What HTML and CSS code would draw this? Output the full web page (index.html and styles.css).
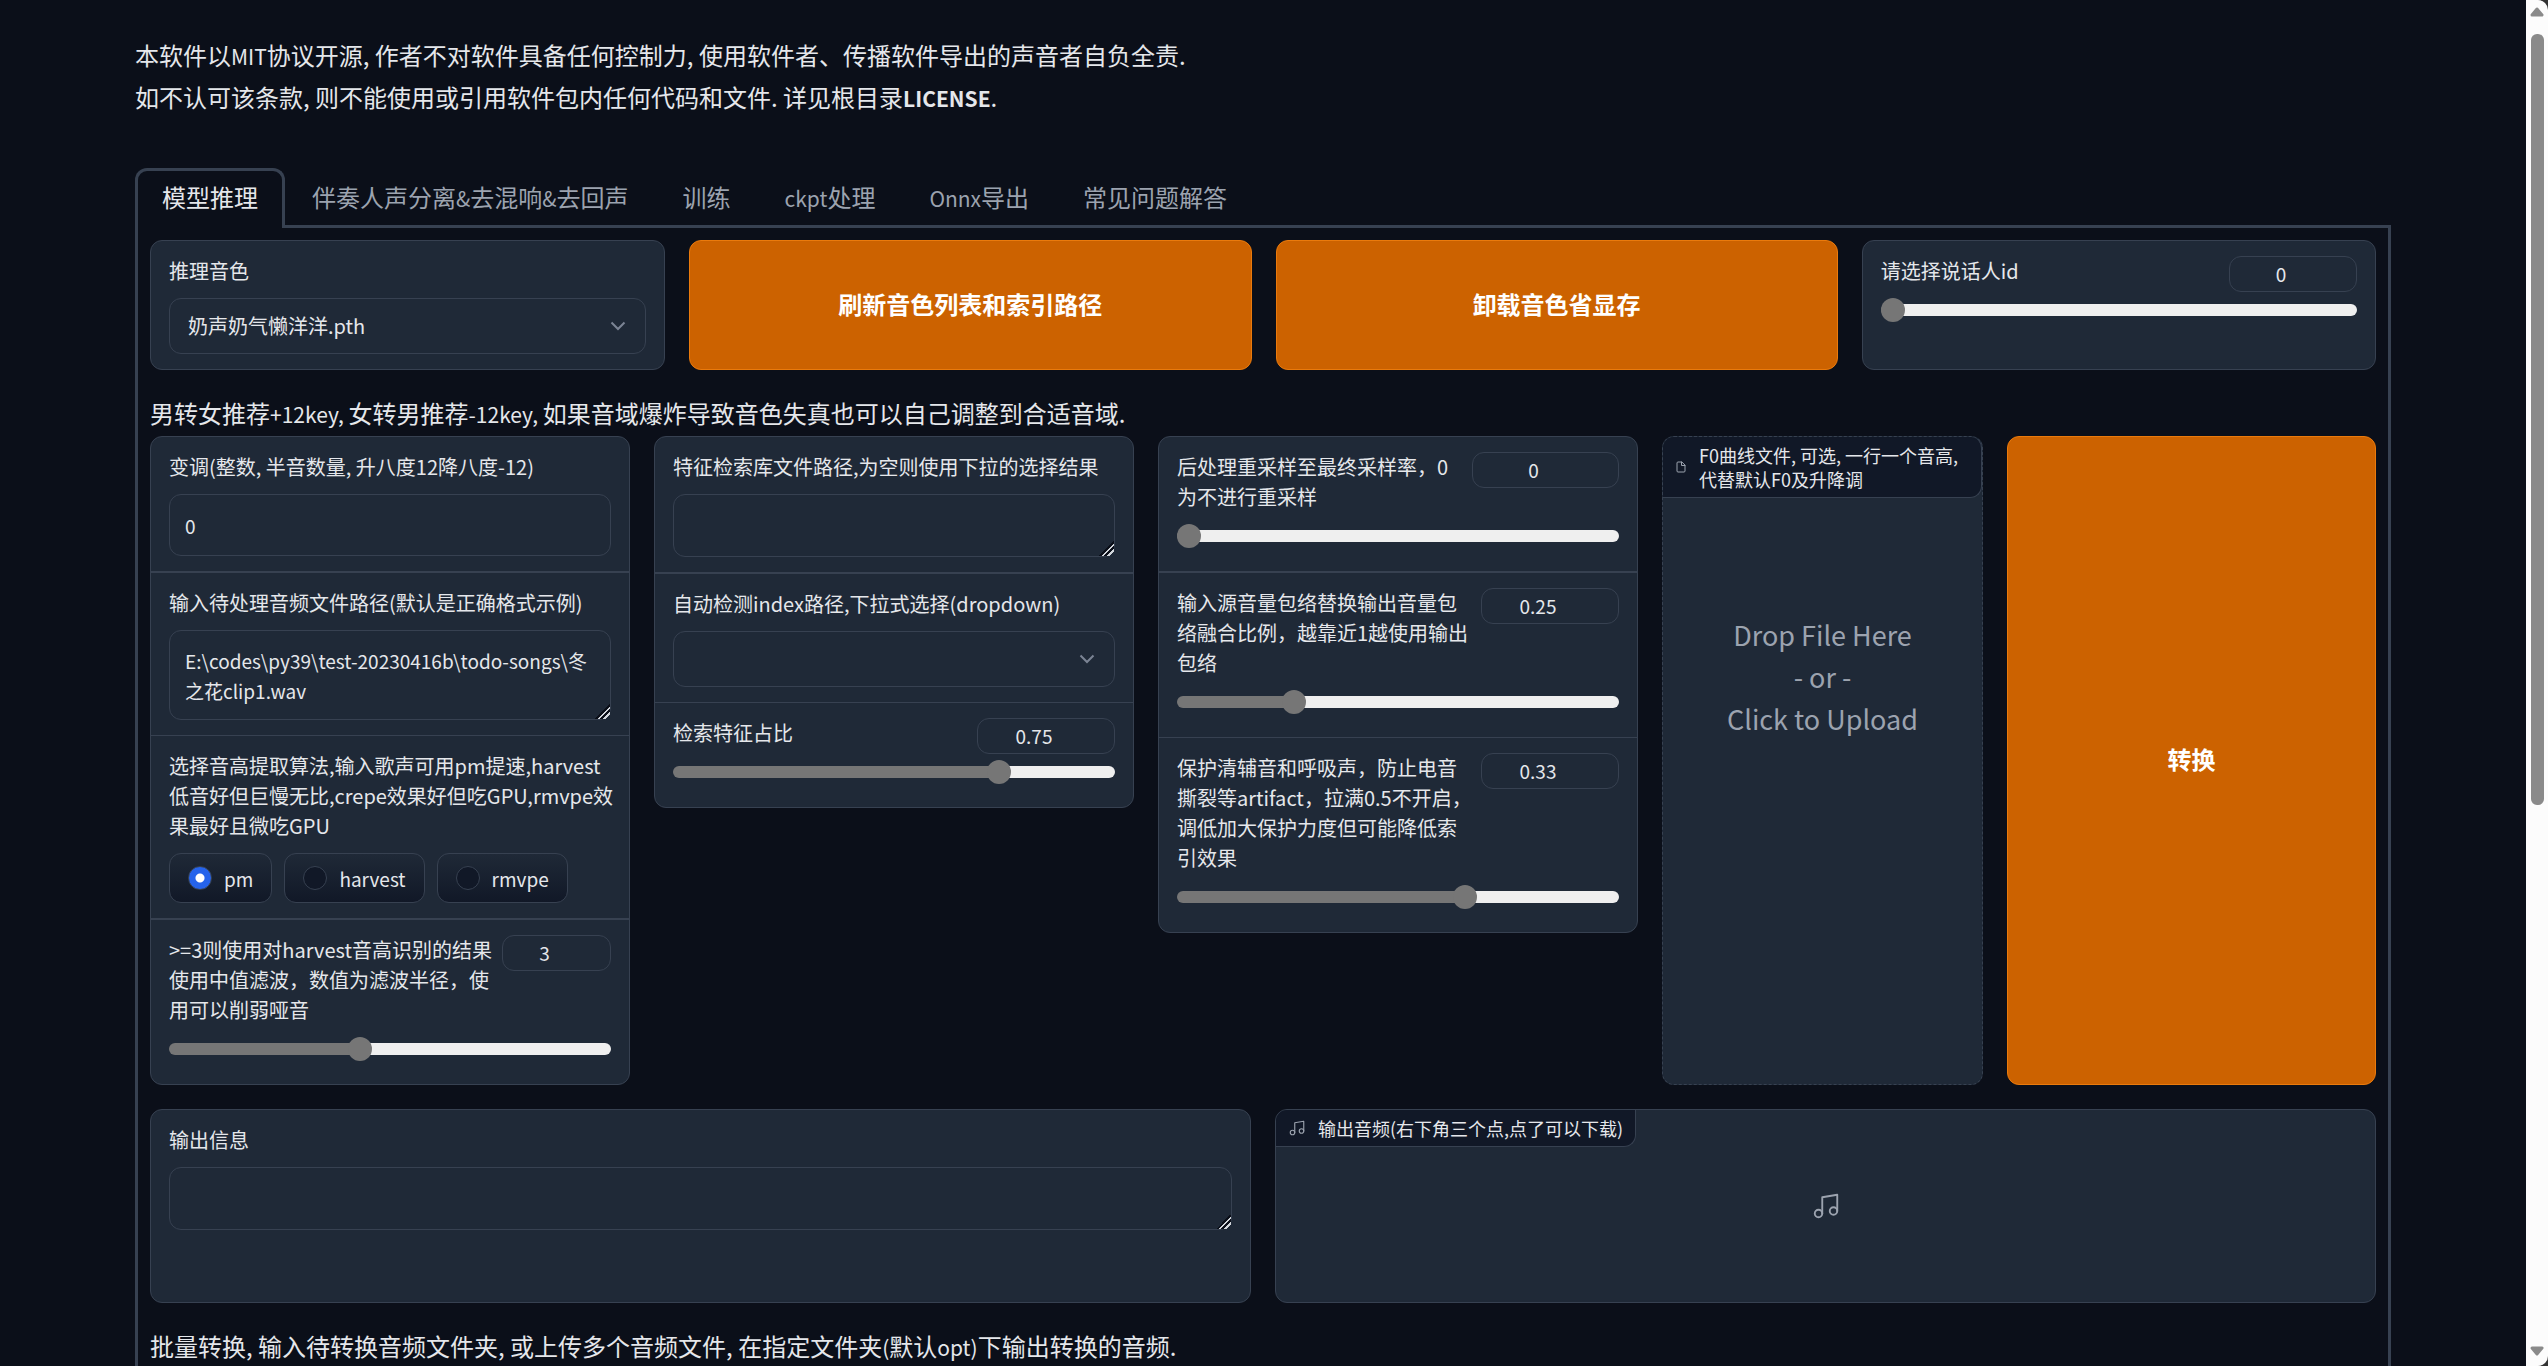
FILE: index.html
```html
<!DOCTYPE html>
<html lang="zh-CN">
<head>
<meta charset="utf-8">
<title>RVC WebUI</title>
<link rel="stylesheet" href="styles.css">
</head>
<body>
<svg class="sprite" aria-hidden="true">
  <symbol id="chevron" viewBox="0 0 16 10"><path d="M1.5 1.5 8 8l6.500-6.500" fill="none" stroke="currentColor" stroke-width="2"/></symbol>
  <symbol id="music" viewBox="0 0 24 24"><g fill="none" stroke="currentColor" stroke-width="1.500" stroke-linecap="round" stroke-linejoin="round"><path d="M9 18V5l12-2v13"/><circle cx="6" cy="18" r="3"/><circle cx="18" cy="16" r="3"/></g></symbol>
  <symbol id="file" viewBox="0 0 24 24"><g fill="none" stroke="currentColor" stroke-width="2" stroke-linecap="round" stroke-linejoin="round"><path d="M13 2H6a2 2 0 0 0-2 2v16a2 2 0 0 0 2 2h12a2 2 0 0 0 2-2V9z"/><path d="M13 2v7h7"/></g></symbol>
</svg>
<main class="app">
  <p class="prose intro">本软件以<span class="latin">MIT</span>协议开源, 作者不对软件具备任何控制力, 使用软件者、传播软件导出的声音者自负全责.<br>如不认可该条款, 则不能使用或引用软件包内任何代码和文件. 详见根目录<strong class="latin">LICENSE</strong>.</p>
  <nav class="tabs">
    <button class="tab tab-active" type="button">模型推理</button>
    <button class="tab" type="button">伴奏人声分离<span class="latin">&amp;</span>去混响<span class="latin">&amp;</span>去回声</button>
    <button class="tab" type="button">训练</button>
    <button class="tab" type="button"><span class="latin">ckpt</span>处理</button>
    <button class="tab" type="button"><span class="latin">Onnx</span>导出</button>
    <button class="tab" type="button">常见问题解答</button>
  </nav>
  <section class="tab-panel">
    <div class="row row-model">
      <div class="card"><div class="block">
        <label class="label" for="voice">推理音色</label>
        <div class="select-wrap"><select class="field select" id="voice"><option>奶声奶气懒洋洋.pth</option></select><svg class="chevron"><use href="#chevron"/></svg></div>
      </div></div>
      <button class="primary" type="button">刷新音色列表和索引路径</button>
      <button class="primary" type="button">卸载音色省显存</button>
      <div class="card"><div class="block">
        <div class="slider-head"><label class="label" for="sid">请选择说话人id</label><input class="field number number-m" type="number" aria-label="请选择说话人id" value="0"></div>
        <input class="range" id="sid" type="range" min="0" max="100" value="0" style="--fill:0">
      </div></div>
    </div>
    <p class="prose hint">男转女推荐<span class="latin">+12key, </span>女转男推荐<span class="latin">-12key, </span>如果音域爆炸导致音色失真也可以自己调整到合适音域.</p>
    <div class="row row-convert">
      <div class="card">
        <div class="block">
          <label class="label" for="pitch">变调(整数, 半音数量, 升八度12降八度-12)</label>
          <input class="field text" id="pitch" type="text" value="0">
        </div>
        <div class="block thick">
          <label class="label" for="path">输入待处理音频文件路径(默认是正确格式示例)</label>
          <textarea class="field area area-two" id="path">E:\codes\py39\test-20230416b\todo-songs\冬之花clip1.wav</textarea>
        </div>
        <div class="block" role="radiogroup" aria-labelledby="f0-label">
          <span class="label" id="f0-label">选择音高提取算法,输入歌声可用pm提速,harvest<br>低音好但巨慢无比,crepe效果好但吃GPU,rmvpe效<br>果最好且微吃GPU</span>
          <div class="choices">
            <label class="choice"><input class="radio" type="radio" name="f0" checked>pm</label>
            <label class="choice"><input class="radio" type="radio" name="f0">harvest</label>
            <label class="choice"><input class="radio" type="radio" name="f0">rmvpe</label>
          </div>
        </div>
        <div class="block thick">
          <div class="slider-head"><label class="label" for="filter">&gt;=3则使用对harvest音高识别的结果<br>使用中值滤波，数值为滤波半径，使<br>用可以削弱哑音</label><input class="field number number-s" type="number" aria-label="滤波半径" value="3"></div>
          <input class="range" id="filter" type="range" min="0" max="7" value="3" style="--fill:.4286">
        </div>
      </div>
      <div class="card card-short">
        <div class="block">
          <label class="label" for="index">特征检索库文件路径,为空则使用下拉的选择结果</label>
          <textarea class="field area" id="index"></textarea>
        </div>
        <div class="block thick">
          <label class="label" for="autoindex">自动检测index路径,下拉式选择(dropdown)</label>
          <div class="select-wrap"><select class="field select" id="autoindex"><option></option></select><svg class="chevron"><use href="#chevron"/></svg></div>
        </div>
        <div class="block">
          <div class="slider-head"><label class="label" for="rate">检索特征占比</label><input class="field number number-l" type="number" aria-label="检索特征占比" value="0.75"></div>
          <input class="range" id="rate" type="range" min="0" max="1" step="0.01" value="0.75" style="--fill:.75">
        </div>
      </div>
      <div class="card card-short">
        <div class="block">
          <div class="slider-head"><label class="label" for="resample">后处理重采样至最终采样率，0<br>为不进行重采样</label><input class="field number number-xl" type="number" aria-label="重采样率" value="0"></div>
          <input class="range" id="resample" type="range" min="0" max="48000" value="0" style="--fill:0">
        </div>
        <div class="block thick">
          <div class="slider-head"><label class="label" for="mix">输入源音量包络替换输出音量包<br>络融合比例，越靠近1越使用输出<br>包络</label><input class="field number number-l" type="number" aria-label="融合比例" value="0.25"></div>
          <input class="range" id="mix" type="range" min="0" max="1" step="0.01" value="0.25" style="--fill:.25">
        </div>
        <div class="block">
          <div class="slider-head"><label class="label" for="protect">保护清辅音和呼吸声，防止电音<br>撕裂等artifact，拉满0.5不开启，<br>调低加大保护力度但可能降低索<br>引效果</label><input class="field number number-l" type="number" aria-label="保护力度" value="0.33"></div>
          <input class="range" id="protect" type="range" min="0" max="0.5" step="0.01" value="0.33" style="--fill:.66">
        </div>
      </div>
      <div class="card card-drop">
        <div class="badge"><svg class="badge-icon"><use href="#file"/></svg><span>F0曲线文件, 可选, 一行一个音高,<br>代替默认F0及升降调</span></div>
        <button class="drop" type="button">Drop File Here<br>- or -<br>Click to Upload</button>
      </div>
      <button class="primary" type="button">转换</button>
    </div>
    <div class="row row-output">
      <div class="card"><div class="block">
        <label class="label" for="out">输出信息</label>
        <textarea class="field area" id="out" readonly></textarea>
      </div></div>
      <div class="card card-audio">
        <div class="badge badge-inline"><svg class="badge-icon"><use href="#music"/></svg><span>输出音频(右下角三个点,点了可以下载)</span></div>
        <svg class="audio-icon"><use href="#music"/></svg>
      </div>
    </div>
    <p class="prose batch">批量转换, 输入待转换音频文件夹, 或上传多个音频文件, 在指定文件夹<span class="latin">(</span>默认<span class="latin">opt)</span>下输出转换的音频.</p>
  </section>
</main>
<div class="scrollbar" aria-hidden="true">
  <svg class="scroll-arrow" viewBox="0 0 16 12"><path d="M8 3 13 9H3z" fill="#8a8a8a" stroke="#8a8a8a" stroke-width="3" stroke-linejoin="round"/></svg>
  <div class="scroll-track"><div class="scroll-thumb"></div></div>
  <svg class="scroll-arrow" viewBox="0 0 16 12"><path d="M8 9 13 3H3z" fill="#8a8a8a" stroke="#8a8a8a" stroke-width="3" stroke-linejoin="round"/></svg>
</div>
</body>
</html>
```
FILE: styles.css
```css
:root {
  --page: #0b0f19;
  --card: #1f2937;
  --line: #374151;
  --text: #e5e7eb;
  --muted: #9ca3af;
}
* { box-sizing: border-box; }
html { background: #333; }
body {
  margin: 0;
  height: 100vh;
  display: flex;
  overflow: hidden;
  color: var(--text);
  font-family: "Noto Sans CJK SC", "Noto Sans", sans-serif;
}
button, input, select, textarea { font-family: inherit; color: inherit; margin: 0; }
.sprite { position: absolute; width: 0; height: 0; }

.app {
  flex: 1;
  min-width: 0;
  padding: 34px 135px 0;
  display: flex;
  flex-direction: column;
  background: var(--page);
}
.prose { margin: 0; font-size: 24px; line-height: 42px; }
.latin { font-size: 21px; line-height: 1; }
.intro { margin-bottom: 50px; }

.tabs { display: flex; flex: none; position: relative; z-index: 1; margin-bottom: -3px; }
.tab {
  height: 60px;
  padding: 0 24px 6px;
  border: 3px solid transparent;
  border-bottom: 0;
  border-radius: 12px 12px 0 0;
  background: none;
  color: var(--muted);
  font-size: 24px;
  line-height: 36px;
}
.tab-active { border-color: var(--line); background: var(--page); color: var(--text); }
.tab-panel { flex: none; border: 3px solid var(--line); padding: 12px 12px 60px; }

.row { display: grid; gap: 24px; }
.row-model { grid-template-columns: 515fr 562fr 562fr 514fr; }
.row-convert { grid-template-columns: 480fr 480fr 480fr 321fr 369fr; }
.row-output { grid-template-columns: 1fr 1fr; margin-top: 24px; }
.hint { padding: 22px 0 2px; }
.batch { padding-top: 22px; }

.card {
  min-width: 0;
  border: 1px solid var(--line);
  border-radius: 12px;
  background: var(--card);
}
.card-short { align-self: start; }
.card-drop { border-style: dashed; }
.card-audio { min-height: 194px; position: relative; display: grid; place-items: center; }

.block { padding: 15px 18px; min-width: 0; }
.block + .block { border-top: 1px solid var(--line); }
.block + .thick { border-top-width: 2px; }

.label {
  display: block;
  margin-bottom: 12px;
  font-size: 20px;
  line-height: 30px;
  white-space: nowrap;
}
.field {
  display: block;
  width: 100%;
  border: 1px solid var(--line);
  border-radius: 12px;
  background: var(--card);
  font-size: 20px;
  line-height: 30px;
}
.text { height: 62px; padding: 0 15px; font-size: 19px; }
.area { height: 63px; padding: 15px; font-size: 19px; resize: vertical; overflow: hidden; }
.area::-webkit-resizer {
  background: linear-gradient(135deg, transparent 50%, #0b0f19 50% 57%, #d1d5db 57% 66%, #0b0f19 66% 76%, #d1d5db 76% 86%, transparent 86%);
}
.area-two { height: 90px; }
.select { height: 56px; padding: 0 18px; appearance: none; }
.select-wrap { position: relative; }
.chevron { position: absolute; right: 20px; top: 23px; width: 16px; height: 10px; color: #7b8494; }

.slider-head { display: flex; justify-content: space-between; align-items: flex-start; }
.slider-head .label { width: 0; }
.number {
  height: 36px;
  margin-bottom: -6px;
  padding: 0 24px 2px 0;
  font-size: 19px;
  text-align: center;
  appearance: textfield;
}
.number::-webkit-inner-spin-button { display: none; }
.number-s { width: 109px; }
.number-m { width: 128px; }
.number-l { width: 138px; }
.number-xl { width: 147px; }

.range {
  display: block;
  width: 100%;
  height: 24px;
  margin: 0 0 8px;
  appearance: none;
  background: none;
}
.range::-webkit-slider-runnable-track {
  height: 12px;
  border-radius: 6px;
  background: linear-gradient(#767676, #767676) 0 0 / calc(12px + (100% - 24px) * var(--fill)) 100% no-repeat, #efefef;
}
.range::-webkit-slider-thumb {
  appearance: none;
  width: 24px;
  height: 24px;
  margin-top: -6px;
  border-radius: 50%;
  background: #767676;
}

.choices { display: flex; gap: 12px; }
.choice {
  display: flex;
  align-items: center;
  gap: 12px;
  height: 50px;
  padding: 0 18px;
  border: 1px solid var(--line);
  border-radius: 12px;
  background: linear-gradient(#1f2937, #111827);
  font-size: 19px;
}
.radio {
  appearance: none;
  width: 24px;
  height: 24px;
  border: 1px solid var(--line);
  border-radius: 50%;
  background: #111827;
}
.radio:checked { background: radial-gradient(circle, #fff 0 4px, #2563eb 5px); }

.primary {
  padding: 0 6px 4px;
  border: 1px solid #ea7a0c;
  border-radius: 12px;
  background: #cc6200;
  color: #fff;
  font-size: 24px;
  font-weight: 700;
}

.badge {
  display: flex;
  align-items: center;
  gap: 12px;
  padding: 6px 12px;
  border: 1px solid var(--line);
  border-width: 0 1px 1px 0;
  border-radius: 11px 0 12px 0;
  background: #111827;
  font-size: 18px;
  line-height: 24px;
  color: var(--text);
  white-space: nowrap;
}
.badge-inline { position: absolute; left: 0; top: 0; }
.badge-icon { flex: none; width: 18px; height: 18px; color: var(--muted); }
.card-drop .badge { border-top-right-radius: 11px; }
.card-drop .badge-icon { width: 12px; height: 12px; }
.drop {
  display: block;
  width: 100%;
  padding: 116px 0 0;
  border: 0;
  background: none;
  color: var(--muted);
  font-size: 27px;
  line-height: 42px;
}
.audio-icon { width: 30px; height: 30px; color: var(--muted); }

.scrollbar {
  flex: none;
  width: 22px;
  padding: 6px 0 9px;
  display: flex;
  flex-direction: column;
  align-items: center;
  gap: 4px;
  background: #fcfcfc;
  border-radius: 0 10px 10px 0;
}
.scroll-arrow { flex: none; width: 16px; height: 12px; }
.scroll-track { flex: 1; padding-top: 12px; }
.scroll-thumb { width: 13px; height: 59%; border-radius: 6px; background: #8a8a8a; }
```
